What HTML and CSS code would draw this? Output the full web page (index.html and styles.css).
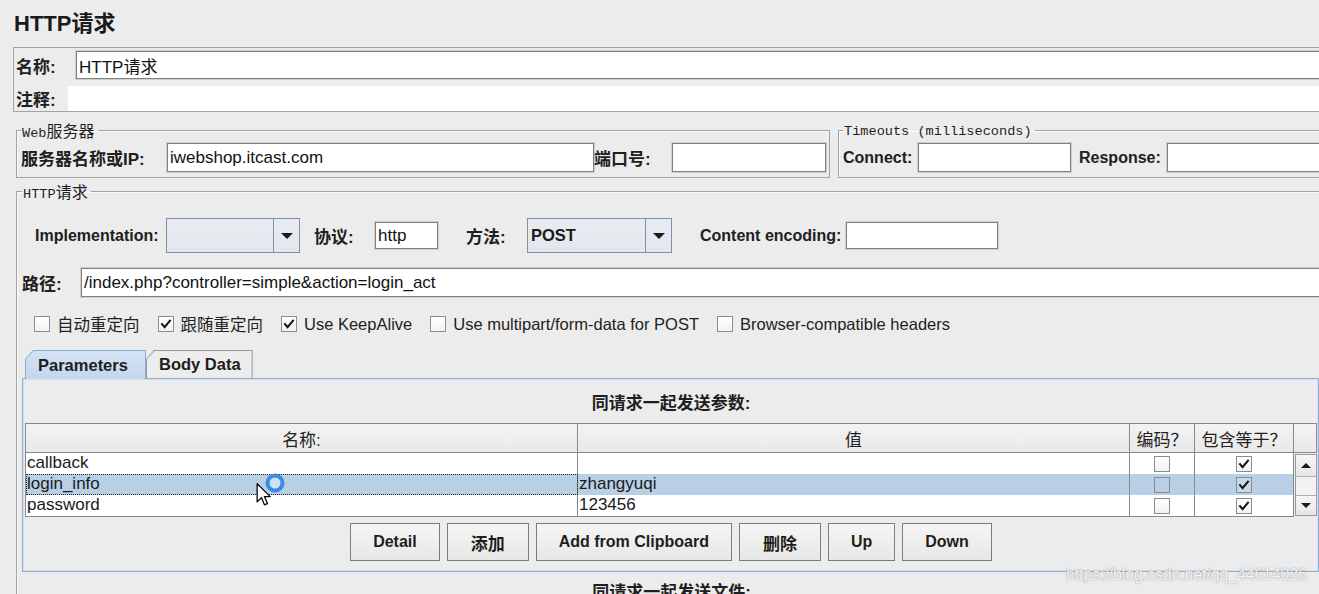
FILE: index.html
```html
<!DOCTYPE html>
<html lang="zh-CN">
<head>
<meta charset="utf-8">
<title>HTTP请求</title>
<link rel="stylesheet" href="styles.css">
</head>
<body>
<div class="page">
  <h1 class="title">HTTP请求</h1>

  <div class="name-panel">
    <div class="name-row">
      <span class="lbl cjk-lbl name-lbl">名称:</span>
      <div class="field grow">HTTP请求</div>
    </div>
    <div class="comment-row">
      <span class="lbl cjk-lbl comment-lbl">注释:</span>
      <div class="area"></div>
    </div>
  </div>

  <div class="server-row">
    <fieldset class="group web">
      <legend><span class="mono">Web</span><span class="cjk">服务器</span></legend>
      <div class="row">
        <span class="lbl cjk-lbl host-lbl">服务器名称或IP:</span>
        <div class="field host">iwebshop.itcast.com</div>
        <span class="lbl cjk-lbl port-lbl">端口号:</span>
        <div class="field port"></div>
      </div>
    </fieldset>
    <fieldset class="group timeouts">
      <legend><span class="mono">Timeouts (milliseconds)</span></legend>
      <div class="row">
        <span class="lbl connect-lbl">Connect:</span>
        <div class="field connect"></div>
        <span class="lbl response-lbl">Response:</span>
        <div class="field grow"></div>
      </div>
    </fieldset>
  </div>

  <fieldset class="group http">
    <legend><span class="mono">HTTP</span><span class="cjk">请求</span></legend>

    <div class="impl-row">
      <span class="lbl impl-lbl">Implementation:</span>
      <div class="combo impl"><span class="combo-val"></span><span class="combo-btn"><i class="tri-down"></i></span></div>
      <span class="lbl cjk-lbl proto-lbl">协议:</span>
      <div class="field proto">http</div>
      <span class="lbl cjk-lbl method-lbl">方法:</span>
      <div class="combo method"><span class="combo-val">POST</span><span class="combo-btn"><i class="tri-down"></i></span></div>
      <span class="lbl enc-lbl">Content encoding:</span>
      <div class="field enc"></div>
    </div>

    <div class="path-row">
      <span class="lbl cjk-lbl path-lbl">路径:</span>
      <div class="field grow">/index.php?controller=simple&amp;action=login_act</div>
    </div>

    <div class="check-row">
      <span class="chk"><span class="box"></span><span class="chk-text">自动重定向</span></span>
      <span class="chk"><span class="box"><svg viewBox="0 0 14 14"><path d="M3 7.2 L5.6 10.2 L11 3.6" /></svg></span><span class="chk-text">跟随重定向</span></span>
      <span class="chk"><span class="box"><svg viewBox="0 0 14 14"><path d="M3 7.2 L5.6 10.2 L11 3.6" /></svg></span><span class="chk-text">Use KeepAlive</span></span>
      <span class="chk"><span class="box"></span><span class="chk-text">Use multipart/form-data for POST</span></span>
      <span class="chk"><span class="box"></span><span class="chk-text">Browser-compatible headers</span></span>
    </div>

    <div class="tabs">
      <div class="tab active"><span class="tab-face">Parameters</span></div>
      <div class="tab"><span class="tab-face">Body Data</span></div>
    </div>

    <div class="tab-panel">
      <div class="panel-heading">同请求一起发送参数:</div>
      <div class="table">
        <div class="thead">
          <div class="th">名称:</div>
          <div class="th">值</div>
          <div class="th">编码？</div>
          <div class="th">包含等于？</div>
          <div class="th corner"></div>
        </div>
        <div class="tbody">
          <div class="rows">
            <div class="tr">
              <div class="td">callback</div>
              <div class="td"></div>
              <div class="td c"><span class="box"></span></div>
              <div class="td c"><span class="box"><svg viewBox="0 0 14 14"><path d="M3 7.2 L5.6 10.2 L11 3.6" /></svg></span></div>
            </div>
            <div class="tr sel">
              <div class="td focus">login_info</div>
              <div class="td">zhangyuqi</div>
              <div class="td c"><span class="box"></span></div>
              <div class="td c"><span class="box"><svg viewBox="0 0 14 14"><path d="M3 7.2 L5.6 10.2 L11 3.6" /></svg></span></div>
            </div>
            <div class="tr">
              <div class="td">password</div>
              <div class="td">123456</div>
              <div class="td c"><span class="box"></span></div>
              <div class="td c"><span class="box"><svg viewBox="0 0 14 14"><path d="M3 7.2 L5.6 10.2 L11 3.6" /></svg></span></div>
            </div>
          </div>
          <div class="scrollbar">
            <div class="sb-btn up"><i class="tri-up"></i></div>
            <div class="sb-track"></div>
            <div class="sb-btn down"><i class="tri-down small"></i></div>
          </div>
        </div>
      </div>
      <div class="buttons">
        <span class="btn">Detail</span>
        <span class="btn cjk-btn">添加</span>
        <span class="btn">Add from Clipboard</span>
        <span class="btn cjk-btn">删除</span>
        <span class="btn">Up</span>
        <span class="btn">Down</span>
      </div>
    </div>

    <div class="files-heading">同请求一起发送文件:</div>
  </fieldset>

  <div class="watermark">https://blog.csdn.net/qq_44614026</div>

  <svg class="busy" viewBox="0 0 22 22"><circle cx="11" cy="11" r="7.5" fill="#cfe3f8" stroke="#3a8de3" stroke-width="4"/></svg>
  <svg class="cursor" viewBox="0 0 14 22"><path d="M1 1 L1 17 L4.8 13.4 L7.4 19.6 L10 18.5 L7.4 12.4 L12.4 12.4 Z" fill="#fff" stroke="#000" stroke-width="1.1" stroke-linejoin="round"/></svg>
</div>
</body>
</html>
```

FILE: styles.css
```css
* { box-sizing: border-box; }

html, body { margin: 0; padding: 0; }

body {
  overflow: hidden;
  background: #ececec;
  font-family: "Liberation Sans", "Noto Sans CJK SC", sans-serif;
  color: #1e1e1e;
}

.page {
  position: relative;
  width: 1340px;
  height: 594px;
}

.title {
  margin: 0;
  height: 47px;
  padding: 11px 0 0 14px;
  font-size: 22px;
  line-height: 26px;
  font-weight: bold;
  color: #1a1a1a;
}

/* generic */
.lbl {
  font-weight: bold;
  font-size: 16px;
  white-space: nowrap;
  flex: none;
  color: #202020;
}
.cjk-lbl { font-size: 17px; }

.field {
  display: flex;
  align-items: center;
  height: 100%;
  background: #fff;
  border: 1px solid #7f7f7f;
  box-shadow: 0 0 0 1px #cfcfcf;
  padding: 0 2px;
  font-size: 17px;
  color: #111;
  white-space: nowrap;
  overflow: hidden;
  flex: none;
}
.grow { flex: 1; }

/* name panel */
.name-panel {
  margin-left: 13px;
  border: 1px solid #a2a2a2;
  border-right: 0;
  padding: 3px 0 0 2px;
}
.name-row {
  display: flex;
  align-items: center;
  height: 28px;
}
.name-lbl { width: 60px; }
.comment-row {
  display: flex;
  align-items: center;
  height: 25px;
  margin-top: 7px;
}
.comment-lbl { width: 52px; }
.area {
  flex: 1;
  height: 100%;
  background: #fff;
}

/* fieldsets */
fieldset.group {
  margin: 0;
  min-width: 0;
  border: 1px solid #a3a3a3;
  box-shadow: inset 1px 1px 0 #fafafa;
}
legend {
  height: 16px;
  line-height: 16px;
  padding: 0 3px 0 1px;
  margin-left: 0;
  white-space: nowrap;
  color: #1e1e1e;
}
.mono {
  font-family: "Liberation Mono", "DejaVu Sans Mono", monospace;
  font-size: 13.6px;
}
.cjk {
  font-family: "Noto Sans CJK SC", sans-serif;
  font-size: 16px;
}

.server-row {
  display: flex;
  gap: 8px;
  margin: 10px 0 0 16px;
}
fieldset.web {
  width: 814px;
  flex: none;
  padding: 5px 3px 5px 4px;
}
fieldset.timeouts {
  flex: 1;
  padding: 5px 0 5px 4px;
}
.row {
  display: flex;
  align-items: center;
  height: 29px;
}
.host-lbl { width: 146px; }
.host { width: 427px; }
.port-lbl { width: 78px; }
.port { width: 154px; }
.connect-lbl { width: 75px; }
.connect { width: 153px; }
.response-lbl { width: 96px; padding-left: 8px; }

/* http fieldset */
fieldset.http {
  margin: 5px 0 0 16px;
  padding: 19px 0 0 5px;
  border-right: 0;
  border-bottom: 0;
  height: 420px;
}

.impl-row {
  display: flex;
  align-items: center;
  height: 35px;
  padding-left: 13px;
}
.impl-lbl { width: 131px; }
.combo {
  display: flex;
  height: 35px;
  border: 1px solid #7d90a4;
  background: linear-gradient(#e9edf2, #e1e7ee);
  flex: none;
}
.combo-val {
  flex: 1;
  display: flex;
  align-items: center;
  padding-left: 3px;
  font-size: 16.5px;
  font-weight: bold;
  color: #1a1a1a;
}
.combo-btn {
  width: 26px;
  border-left: 1px solid #7d90a4;
  display: flex;
  align-items: center;
  justify-content: center;
}
.impl { width: 134px; }
.method { width: 145px; }
.tri-down {
  display: block;
  width: 0;
  height: 0;
  border-left: 6px solid transparent;
  border-right: 6px solid transparent;
  border-top: 6px solid #1a1a1a;
}
.tri-down.small {
  border-left-width: 5px;
  border-right-width: 5px;
  border-top-width: 5px;
}
.tri-up {
  display: block;
  width: 0;
  height: 0;
  border-left: 5px solid transparent;
  border-right: 5px solid transparent;
  border-bottom: 5px solid #1a1a1a;
}
.proto-lbl { width: 61px; margin-left: 14px; }
.impl-row .proto { width: 63px; height: 27px; }
.method-lbl { width: 61px; margin-left: 28px; }
.enc-lbl { width: 146px; margin-left: 28px; }
.impl-row .enc { width: 152px; height: 27px; }

.path-row {
  display: flex;
  align-items: center;
  height: 29px;
  margin-top: 15px;
}
.path-lbl { width: 59px; }

.check-row {
  display: flex;
  align-items: center;
  gap: 18px;
  height: 20px;
  margin-top: 17px;
  padding-left: 12px;
  font-size: 16.5px;
  color: #222;
}
.chk {
  display: flex;
  align-items: center;
  white-space: nowrap;
}
.chk-text { margin-left: 7px; }
.box {
  width: 16px;
  height: 16px;
  border: 1px solid #8c8c8c;
  background: linear-gradient(#ffffff, #f1f1f1);
  display: flex;
  align-items: center;
  justify-content: center;
  flex: none;
}
.box svg { width: 14px; height: 14px; }
.box path {
  fill: none;
  stroke: #111;
  stroke-width: 2;
  stroke-linecap: square;
}

/* tabs */
.tabs {
  display: flex;
  align-items: flex-end;
  margin: 16px 0 0 3px;
  height: 28px;
  position: relative;
  z-index: 1;
}
.tab {
  height: 28px;
  padding: 1px 1px 0 1px;
  background: #9a9a9a;
  clip-path: polygon(0 9px, 8px 0, 100% 0, 100% 100%, 0 100%);
  flex: none;
}
.tab-face {
  display: flex;
  align-items: center;
  height: 100%;
  padding: 0 11px 0 12px;
  font-weight: bold;
  font-size: 16.5px;
  white-space: nowrap;
  color: #1e1e1e;
  background: #ededed;
  clip-path: polygon(0 8px, 7.5px 0, 100% 0, 100% 100%, 0 100%);
}
.tab.active {
  width: 121px;
  height: 29px;
  margin-bottom: -1px;
  background: #8eaace;
}
.tab.active .tab-face {
  background: linear-gradient(#d4e3f4, #c3d7ef);
}

.tab-panel {
  margin-right: 21px;
  border: 1px solid #92afd3;
  box-shadow: inset 0 0 0 1px #d3e0ef;
  padding: 0 1px 9px 2px;
  height: 194px;
}
.panel-heading {
  margin-top: 15px;
  height: 20px;
  line-height: 20px;
  text-align: center;
  font-weight: bold;
  font-size: 17px;
  color: #1e1e1e;
}

/* table */
.table { margin-top: 9px; }
.thead {
  display: grid;
  grid-template-columns: 552px 552px 65px 99px 1fr;
  height: 30px;
  border-top: 1px solid #8a8a8a;
  border-left: 1px solid #8a8a8a;
  border-bottom: 1px solid #8a8a8a;
}
.th {
  display: flex;
  align-items: center;
  justify-content: center;
  border-right: 1px solid #8a8a8a;
  background: linear-gradient(#f3f3f3, #e9e9e9);
  font-size: 17px;
  color: #222;
}
.tbody { display: flex; }
.rows {
  width: 1269px;
  border-left: 1px solid #8a8a8a;
  border-bottom: 1px solid #8a8a8a;
  background: #fff;
}
.tr {
  display: grid;
  grid-template-columns: 552px 552px 65px 99px;
  height: 21px;
}
.td {
  border-right: 1px solid #8a8a8a;
  font-size: 17px;
  line-height: 20px;
  padding-left: 1px;
  color: #1a1a1a;
  white-space: nowrap;
}
.td.c {
  display: flex;
  align-items: center;
  justify-content: center;
  padding-left: 0;
}
.tr.sel { background: #b8cfe6; }
.tr.sel .box { background: #c6d8eb; }
.tr.sel .td.c:nth-child(3) .box { background: #b8cfe6; }
.td.focus { outline: 1px dotted #222; outline-offset: -1px; }

.scrollbar {
  width: 22px;
  margin-left: 1px;
  margin-top: 1px;
  height: 62px;
  display: flex;
  flex-direction: column;
  border: 1px solid #9a9a9a;
}
.sb-btn {
  display: flex;
  align-items: center;
  justify-content: center;
  background: linear-gradient(#f6f6f6, #e6e6e6);
}
.sb-btn.up { height: 22px; border-bottom: 1px solid #b0b0b0; }
.sb-btn.down { height: 20px; border-top: 1px solid #b0b0b0; }
.sb-track { flex: 1; background: #f2f2f2; }

/* buttons */
.buttons {
  display: flex;
  justify-content: center;
  gap: 7px;
  margin-top: 6px;
}
.btn {
  display: flex;
  align-items: center;
  height: 38px;
  padding: 0 22px;
  border: 1px solid #7c7c7c;
  background: linear-gradient(#f5f5f5, #e7e7e7);
  font-weight: bold;
  font-size: 16px;
  color: #1e1e1e;
  white-space: nowrap;
}
.cjk-btn { font-size: 17px; padding: 0 23px; }

.files-heading {
  margin: 11px 21px 0 0;
  padding-left: 2px;
  height: 20px;
  line-height: 20px;
  text-align: center;
  font-weight: bold;
  font-size: 17px;
  color: #1e1e1e;
}

/* overlays */
.watermark {
  position: absolute;
  left: 1066px;
  top: 566px;
  font-size: 15.7px;
  color: rgba(255, 255, 255, 0.92);
  text-shadow: 0 0 1px rgba(120, 120, 120, 0.7), 0 0 2px rgba(150, 150, 150, 0.5);
  white-space: nowrap;
}
.busy {
  position: absolute;
  left: 264px;
  top: 472px;
  width: 22px;
  height: 22px;
}
.cursor {
  position: absolute;
  left: 256px;
  top: 482px;
  width: 16px;
  height: 26px;
}
```
